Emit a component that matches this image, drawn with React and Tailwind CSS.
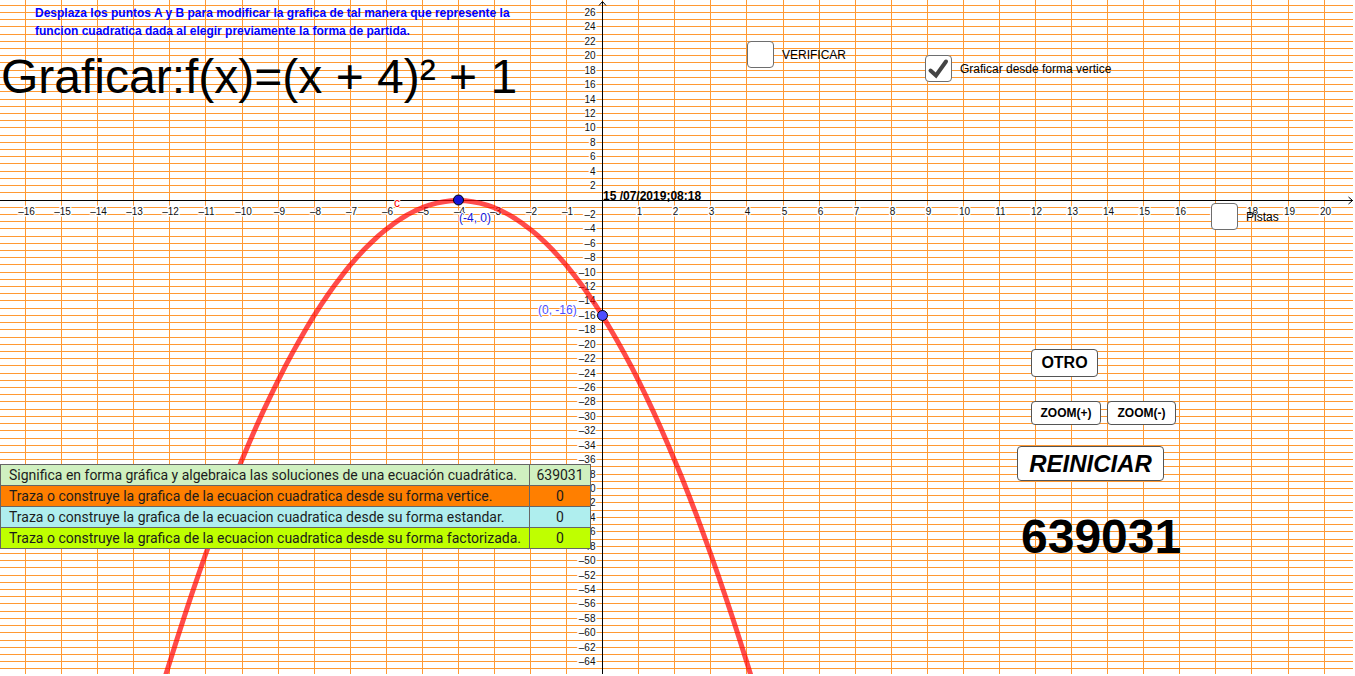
import React, { useState } from 'react';

// --- Board scale: origin position and pixels per unit on each axis ---
const ORIGIN = { x: 602.7, y: 200 };
const UNIT = { x: 36.07, y: 7.214 };

const toX = (x) => Math.floor(ORIGIN.x + x * UNIT.x) + 0.5;
const toY = (y) => Math.floor(ORIGIN.y - y * UNIT.y) + 0.5;

const range = (from, to, step = 1) =>
  Array.from({ length: Math.floor((to - from) / step) + 1 }, (_, i) => from + i * step);

const formatTick = (n) => (n < 0 ? `–${-n}` : `${n}`);

const columns = range(-16, 60);
const rows = range(-200, 27);
const xTicks = range(-16, 20).filter((n) => n !== 0);
const yTicks = range(-64, 26, 2).filter((n) => n !== 0);

// y = -(x + 4)^2
const curve = range(-60, 60)
  .map((i) => {
    const x = -4 + i / 5;
    const px = toX(0) + x * UNIT.x;
    const py = toY(0) + (x + 4) ** 2 * UNIT.y;
    return `${px.toFixed(1)},${py.toFixed(1)}`;
  })
  .join(' ');

const scores = [
  { text: 'Significa en forma gráfica y algebraica las soluciones de una ecuación cuadrática.', value: 639031, color: 'bg-[#d0f0c0]' },
  { text: 'Traza o construye la grafica de la ecuacion cuadratica desde su forma vertice.', value: 0, color: 'bg-[#ff7f00]' },
  { text: 'Traza o construye la grafica de la ecuacion cuadratica desde su forma estandar.', value: 0, color: 'bg-[#afeeee]' },
  { text: 'Traza o construye la grafica de la ecuacion cuadratica desde su forma factorizada.', value: 0, color: 'bg-[#bfff00]' },
];

function Board() {
  return (
    <svg className="absolute inset-0 h-full w-full overflow-hidden" aria-hidden="true">
      {/* Grid */}
      <g stroke="#ff9933" strokeWidth="1" shapeRendering="crispEdges">
        {rows.map((n) => (
          <line key={n} x1="0" x2="100%" y1={toY(n)} y2={toY(n)} />
        ))}
        {columns.map((n) => (
          <line key={n} x1={toX(n)} x2={toX(n)} y1="0" y2="100%" />
        ))}
      </g>

      {/* Axes with arrow heads */}
      <g stroke="#000" fill="none">
        <line x1="0" x2="100%" y1={toY(0)} y2={toY(0)} shapeRendering="crispEdges" />
        <line x1={toX(0)} x2={toX(0)} y1="2" y2="100%" shapeRendering="crispEdges" />
        <path d={`M${toX(0) - 3.5} 5.5 L${toX(0)} 1.5 L${toX(0) + 3.5} 5.5`} />
        <svg x="100%" y={toY(0)} overflow="visible">
          <path d="M-4.5 -3.5 L-0.5 0 L-4.5 3.5" />
        </svg>
      </g>

      {/* Tick labels */}
      <g
        className="font-['Liberation_Sans',Arial,sans-serif] text-[10px]"
        fill="#111"
        stroke="#fff"
        strokeWidth="3"
        strokeLinejoin="round"
        paintOrder="stroke"
      >
        {xTicks.map((n) => (
          <text key={n} x={toX(n) + 1} y={toY(0) + 14} textAnchor="middle">{formatTick(n)}</text>
        ))}
        {yTicks.map((n) => (
          <text key={n} x={toX(0) - 7} y={toY(n) + 3} textAnchor="end">{formatTick(n)}</text>
        ))}
      </g>

      <polyline points={curve} fill="none" stroke="#ff0000" strokeOpacity="0.7" strokeWidth="5" strokeLinejoin="round" />

      {/* Points A and B with their coordinates */}
      <g stroke="#000">
        <circle cx={toX(-4)} cy={toY(0) - 0.5} r="5" fill="#1515d8" />
        <circle cx={toX(0)} cy={toY(-16)} r="5" fill="#4d4dff" />
      </g>
      <g
        className="font-['Liberation_Sans',Arial,sans-serif] text-xs"
        stroke="#fff"
        strokeWidth="2"
        strokeLinejoin="round"
        paintOrder="stroke"
      >
        <text x="394" y="207" fill="#ff0000">c</text>
        <text x="459" y="222" fill="#1515d8">(-4, 0)</text>
        <text x="538" y="314" fill="#4d4dff">(0, -16)</text>
      </g>
    </svg>
  );
}

function CheckOption({ label, checked, onChange, className }) {
  return (
    <label className={`flex items-center gap-2 text-xs text-black ${className}`}>
      <span className="grid size-[27px] shrink-0">
        <input
          type="checkbox"
          checked={checked}
          onChange={(e) => onChange(e.target.checked)}
          className="col-start-1 row-start-1 size-[27px] appearance-none rounded border border-[#6e6e6e] bg-white"
        />
        {checked && (
          <svg viewBox="0 0 27 27" className="pointer-events-none col-start-1 row-start-1 size-[27px]" fill="none">
            <path d="M5.5 15.5 L11 20.5 L21 6.5" stroke="#444" strokeWidth="4" strokeLinecap="round" strokeLinejoin="miter" />
          </svg>
        )}
      </span>
      <span className="whitespace-nowrap">{label}</span>
    </label>
  );
}

function BoardButton({ children, className }) {
  return (
    <button type="button" className={`rounded border border-[#555] bg-white text-center font-bold text-black ${className}`}>
      {children}
    </button>
  );
}

function ScoreTable() {
  return (
    <table className="w-[591px] table-fixed border-collapse font-['Roboto',sans-serif] text-sm leading-5 text-[#1c1c1c]">
      <tbody>
        {scores.map((row) => (
          <tr key={row.text} className={row.color}>
            <td className="border border-[#666] py-0 pl-2 whitespace-nowrap">{row.text}</td>
            <td className="w-[61px] border border-[#666] p-0 text-center">{row.value}</td>
          </tr>
        ))}
      </tbody>
    </table>
  );
}

export default function App() {
  const [verify, setVerify] = useState(false);
  const [fromVertex, setFromVertex] = useState(true);
  const [hints, setHints] = useState(false);

  return (
    <main className="h-screen overflow-hidden bg-white pr-0.5 pb-0.5 font-['Liberation_Sans',Arial,sans-serif]">
      <div className="relative h-full overflow-hidden">
        <Board />

        <div className="relative flex items-start">
          {/* Exercise and scores */}
          <section className="w-[603px] shrink-0">
            <p className="pt-1 pl-[35px] text-xs leading-[18px] font-bold whitespace-nowrap text-[#0000ff]">
              Desplaza los puntos A y B para modificar la grafica de tal manera que represente la
              <br />
              funcion cuadratica dada al elegir previamente la forma de partida.
            </p>
            <h1 className="mt-[9px] pl-px text-5xl leading-14 whitespace-nowrap text-black">Graficar:f(x)=(x + 4)² + 1</h1>
            <div className="mt-[359px]">
              <ScoreTable />
            </div>
          </section>

          {/* Controls */}
          <section className="min-w-0 flex-1">
            <div className="flex items-start pt-[41px] pl-36">
              <CheckOption label="VERIFICAR" checked={verify} onChange={setVerify} className="w-[178px]" />
              <CheckOption label="Graficar desde forma vertice" checked={fromVertex} onChange={setFromVertex} className="mt-3.5" />
            </div>
            <time className="mt-[106px] block text-xs leading-4 font-bold text-black">15 /07/2019;08:18</time>
            <CheckOption label="Pistas" checked={hints} onChange={setHints} className="-mt-px ml-[608px]" />

            <div className="mt-[119px] ml-[414px] flex flex-col items-start">
              <BoardButton className="ml-3.5 h-7 w-[67px] text-base">OTRO</BoardButton>
              <div className="mt-6 ml-3.5 flex items-center gap-1.5">
                <BoardButton className="h-6 w-[70px] text-xs">ZOOM(+)</BoardButton>
                <BoardButton className="h-6 w-[69px] text-xs">ZOOM(-)</BoardButton>
              </div>
              <BoardButton className="mt-[21px] h-[35px] w-[147px] text-2xl leading-8 italic">REINICIAR</BoardButton>
              <output className="mt-7 ml-1 block text-5xl leading-14 font-bold text-black">639031</output>
            </div>
          </section>
        </div>
      </div>
    </main>
  );
}
